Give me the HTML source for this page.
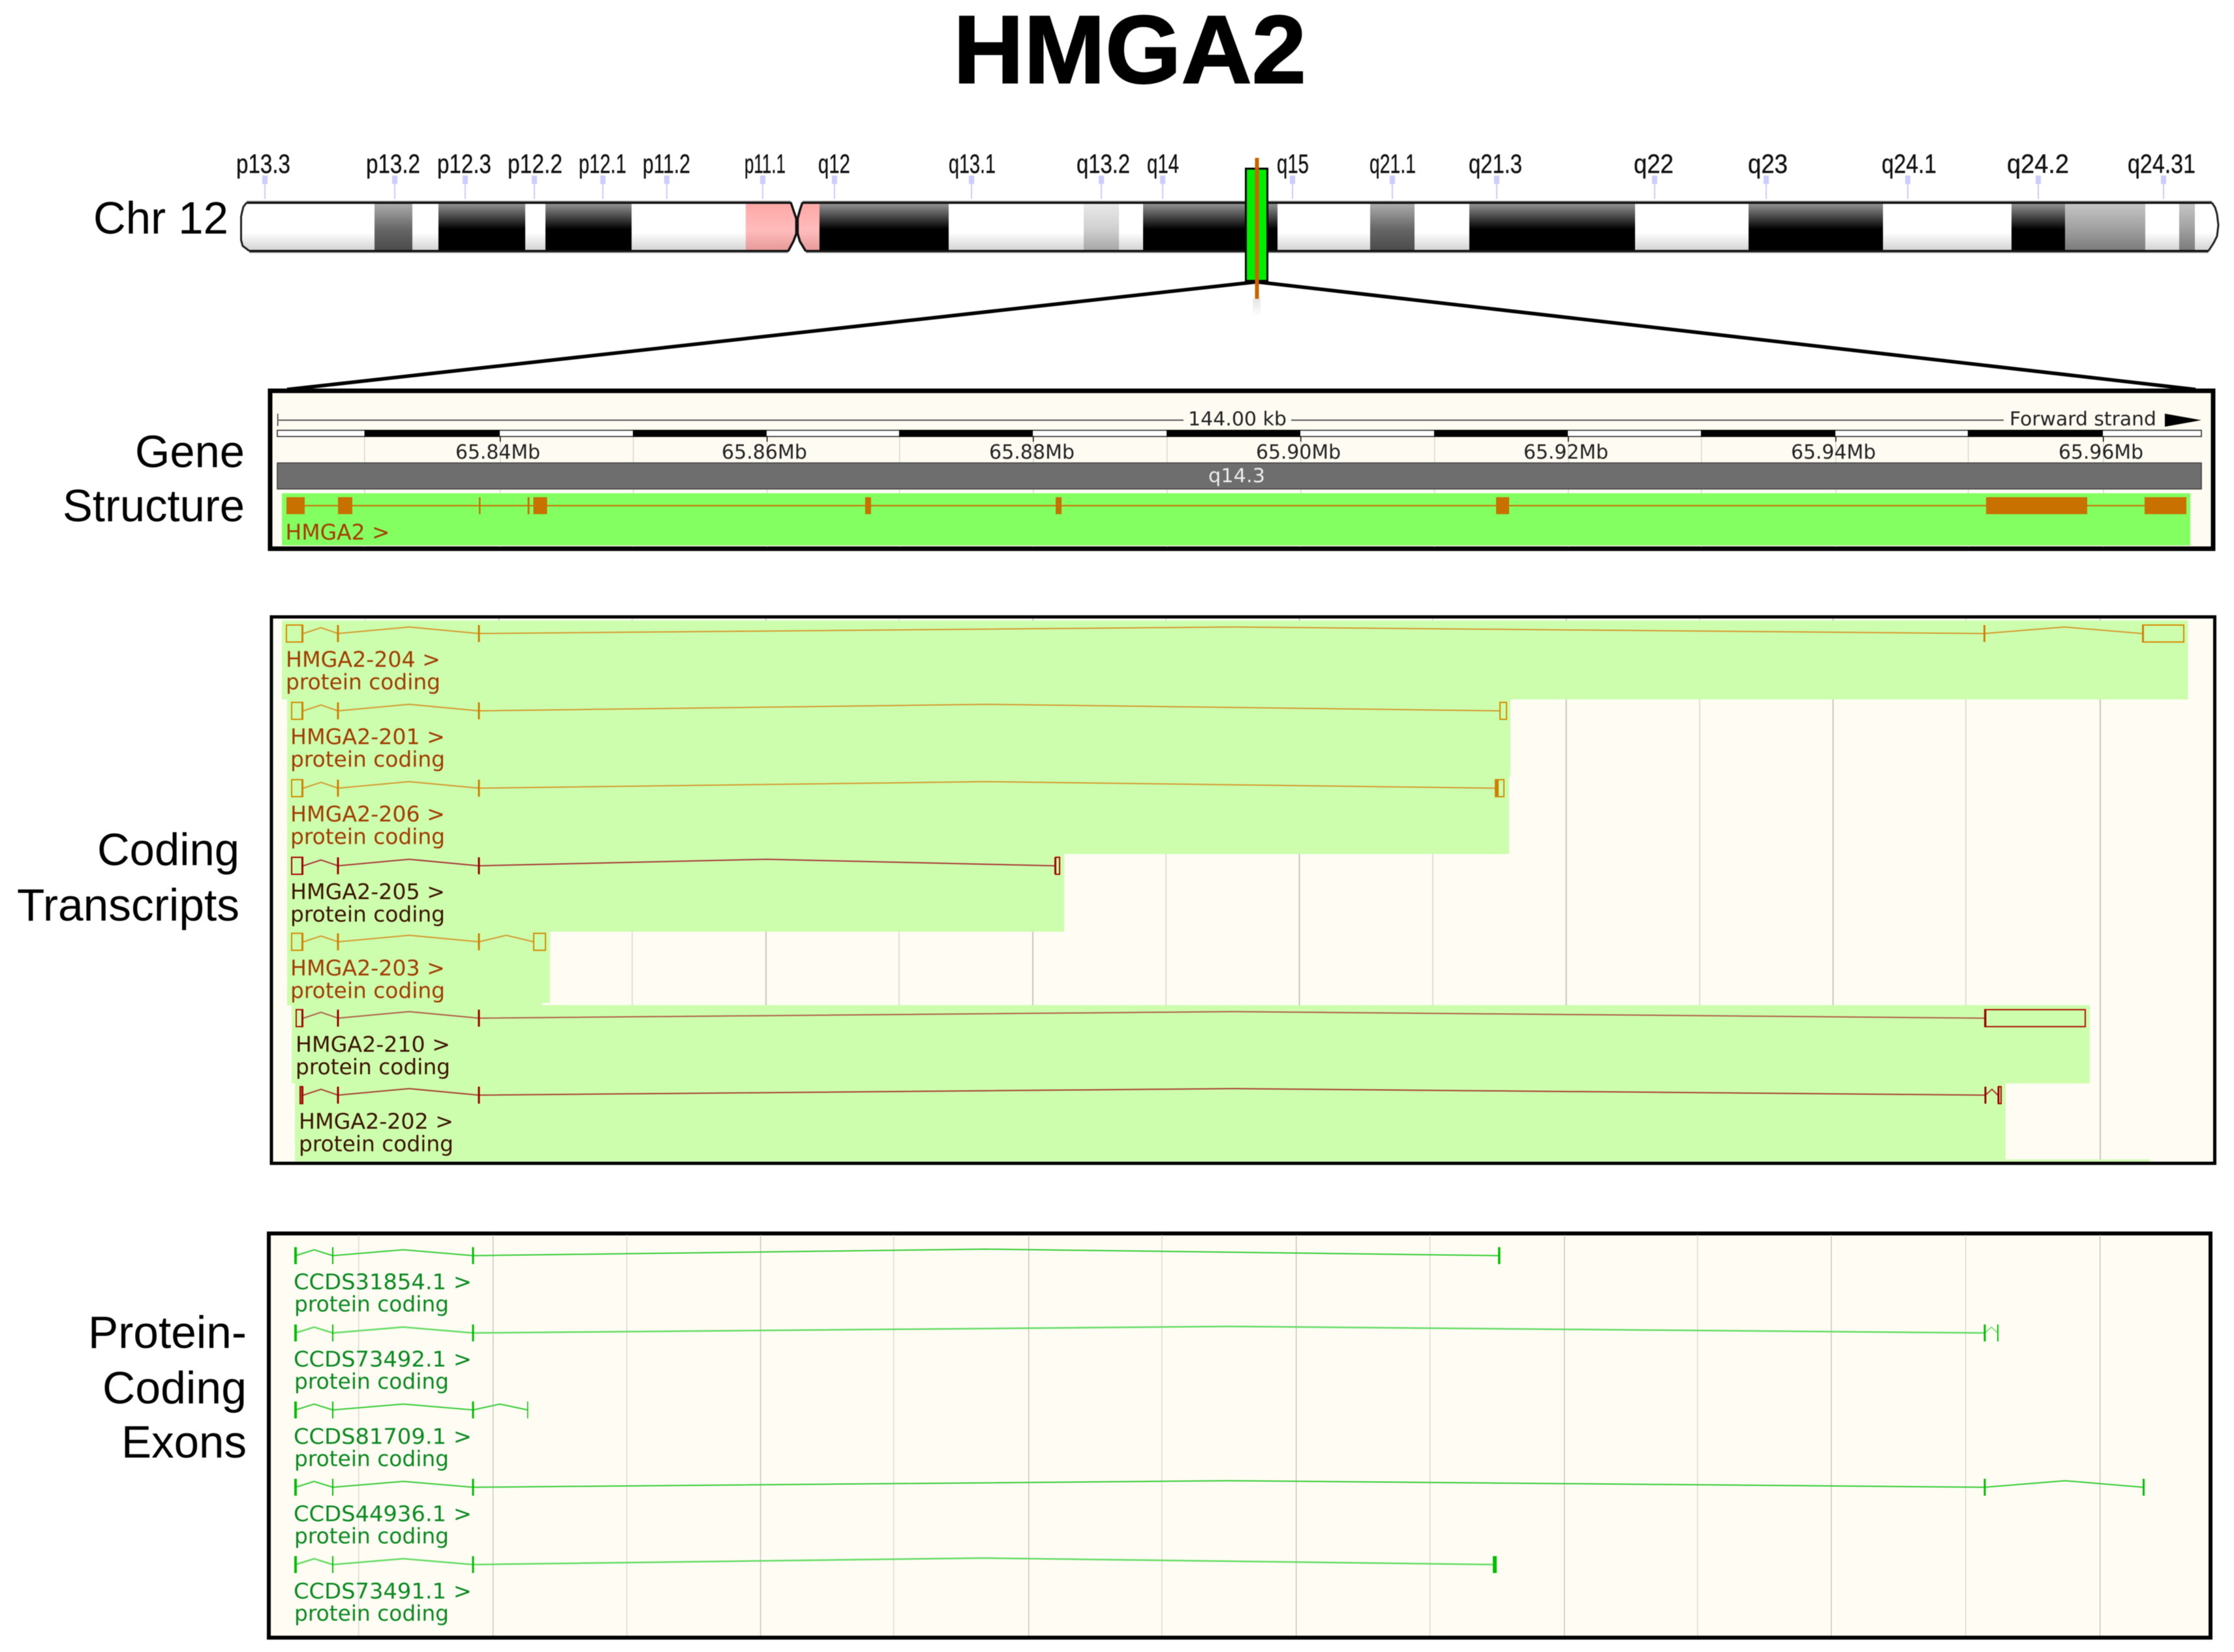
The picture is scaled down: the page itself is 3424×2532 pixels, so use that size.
<!DOCTYPE html>
<html><head><meta charset="utf-8"><title>HMGA2</title>
<style>
html,body{margin:0;padding:0;background:#fff;width:3424px;height:2532px;overflow:hidden}
svg{display:block;filter:blur(.6px)}
.l{font-family:"Liberation Sans",Arial,sans-serif}
.d{font-family:"DejaVu Sans",sans-serif}
</style></head><body>
<svg xmlns="http://www.w3.org/2000/svg" width="3424" height="2532" viewBox="0 0 3424 2532">
<defs>
<linearGradient id="gb" x1="0" y1="313" x2="0" y2="383" gradientUnits="userSpaceOnUse"><stop offset="0" stop-color="#909090"/><stop offset=".55" stop-color="#000"/><stop offset="1" stop-color="#000"/></linearGradient>
<linearGradient id="gw" x1="0" y1="313" x2="0" y2="383" gradientUnits="userSpaceOnUse"><stop offset="0" stop-color="#fff"/><stop offset=".62" stop-color="#fff"/><stop offset="1" stop-color="#d4d4d4"/></linearGradient>
<linearGradient id="gg" x1="0" y1="313" x2="0" y2="383" gradientUnits="userSpaceOnUse"><stop offset="0" stop-color="#aaa"/><stop offset=".55" stop-color="#666"/><stop offset="1" stop-color="#4c4c4c"/></linearGradient>
<linearGradient id="gl" x1="0" y1="313" x2="0" y2="383" gradientUnits="userSpaceOnUse"><stop offset="0" stop-color="#e8e8e8"/><stop offset=".55" stop-color="#d0d0d0"/><stop offset="1" stop-color="#a8a8a8"/></linearGradient>
<linearGradient id="gm" x1="0" y1="313" x2="0" y2="383" gradientUnits="userSpaceOnUse"><stop offset="0" stop-color="#c4c4c4"/><stop offset=".55" stop-color="#a0a0a0"/><stop offset="1" stop-color="#7c7c7c"/></linearGradient>
<linearGradient id="gp" x1="0" y1="313" x2="0" y2="383" gradientUnits="userSpaceOnUse"><stop offset="0" stop-color="#ffa8a8"/><stop offset=".58" stop-color="#ffbcbc"/><stop offset="1" stop-color="#e89a9a"/></linearGradient>
<linearGradient id="gs" x1="0" y1="458" x2="0" y2="485" gradientUnits="userSpaceOnUse"><stop offset="0" stop-color="#ccc"/><stop offset="1" stop-color="#fff"/></linearGradient>
</defs>

<text class="l" x="1461" y="127" font-size="148" font-weight="bold" textLength="541" lengthAdjust="spacingAndGlyphs" stroke="#000" stroke-width="2">HMGA2</text>

<g class="l" font-size="70" fill="#000">
<text x="143" y="358" textLength="207" lengthAdjust="spacingAndGlyphs">Chr 12</text>
<text x="207" y="716" textLength="168" lengthAdjust="spacingAndGlyphs">Gene</text>
<text x="96" y="799" textLength="279" lengthAdjust="spacingAndGlyphs">Structure</text>
<text x="149" y="1326" textLength="218" lengthAdjust="spacingAndGlyphs">Coding</text>
<text x="26" y="1411" textLength="341" lengthAdjust="spacingAndGlyphs">Transcripts</text>
<text x="135" y="2066" textLength="243" lengthAdjust="spacingAndGlyphs">Protein-</text>
<text x="157" y="2151" textLength="221" lengthAdjust="spacingAndGlyphs">Coding</text>
<text x="186" y="2234" textLength="192" lengthAdjust="spacingAndGlyphs">Exons</text>
</g>

<!-- band labels -->
<g class="l" font-size="41" fill="#111" stroke="#111" stroke-width=".4">
<text x="362" y="265" textLength="83" lengthAdjust="spacingAndGlyphs">p13.3</text>
<text x="561" y="265" textLength="83" lengthAdjust="spacingAndGlyphs">p13.2</text>
<text x="670" y="265" textLength="83" lengthAdjust="spacingAndGlyphs">p12.3</text>
<text x="778" y="265" textLength="84" lengthAdjust="spacingAndGlyphs">p12.2</text>
<text x="887" y="265" textLength="73" lengthAdjust="spacingAndGlyphs">p12.1</text>
<text x="985" y="265" textLength="73" lengthAdjust="spacingAndGlyphs">p11.2</text>
<text x="1141" y="265" textLength="63" lengthAdjust="spacingAndGlyphs">p11.1</text>
<text x="1254" y="265" textLength="49" lengthAdjust="spacingAndGlyphs">q12</text>
<text x="1454" y="265" textLength="72" lengthAdjust="spacingAndGlyphs">q13.1</text>
<text x="1650" y="265" textLength="82" lengthAdjust="spacingAndGlyphs">q13.2</text>
<text x="1758" y="265" textLength="49" lengthAdjust="spacingAndGlyphs">q14</text>
<text x="1957" y="265" textLength="49" lengthAdjust="spacingAndGlyphs">q15</text>
<text x="2099" y="265" textLength="71" lengthAdjust="spacingAndGlyphs">q21.1</text>
<text x="2251" y="265" textLength="82" lengthAdjust="spacingAndGlyphs">q21.3</text>
<text x="2504" y="265" textLength="61" lengthAdjust="spacingAndGlyphs">q22</text>
<text x="2679" y="265" textLength="61" lengthAdjust="spacingAndGlyphs">q23</text>
<text x="2884" y="265" textLength="84" lengthAdjust="spacingAndGlyphs">q24.1</text>
<text x="3076" y="265" textLength="95" lengthAdjust="spacingAndGlyphs">q24.2</text>
<text x="3261" y="265" textLength="104" lengthAdjust="spacingAndGlyphs">q24.31</text>
</g>
<!-- ticks -->
<g fill="#ccccff">
<rect x="402" y="269" width="8" height="13"/><rect x="405" y="282" width="2" height="23"/>
<rect x="601" y="269" width="8" height="13"/><rect x="604" y="282" width="2" height="23"/>
<rect x="709" y="269" width="8" height="13"/><rect x="712" y="282" width="2" height="23"/>
<rect x="815" y="269" width="8" height="13"/><rect x="818" y="282" width="2" height="23"/>
<rect x="920" y="269" width="8" height="13"/><rect x="923" y="282" width="2" height="23"/>
<rect x="1018" y="269" width="8" height="13"/><rect x="1021" y="282" width="2" height="23"/>
<rect x="1165" y="269" width="8" height="13"/><rect x="1168" y="282" width="2" height="23"/>
<rect x="1275" y="269" width="8" height="13"/><rect x="1278" y="282" width="2" height="23"/>
<rect x="1485" y="269" width="8" height="13"/><rect x="1488" y="282" width="2" height="23"/>
<rect x="1684" y="269" width="8" height="13"/><rect x="1687" y="282" width="2" height="23"/>
<rect x="1778" y="269" width="8" height="13"/><rect x="1781" y="282" width="2" height="23"/>
<rect x="1977" y="269" width="8" height="13"/><rect x="1980" y="282" width="2" height="23"/>
<rect x="2130" y="269" width="8" height="13"/><rect x="2133" y="282" width="2" height="23"/>
<rect x="2290" y="269" width="8" height="13"/><rect x="2293" y="282" width="2" height="23"/>
<rect x="2532" y="269" width="8" height="13"/><rect x="2535" y="282" width="2" height="23"/>
<rect x="2703" y="269" width="8" height="13"/><rect x="2706" y="282" width="2" height="23"/>
<rect x="2920" y="269" width="8" height="13"/><rect x="2923" y="282" width="2" height="23"/>
<rect x="3120" y="269" width="8" height="13"/><rect x="3123" y="282" width="2" height="23"/>
<rect x="3312" y="269" width="8" height="13"/><rect x="3315" y="282" width="2" height="23"/>
</g>

<!-- chromosome -->
<path d="M378 311 L373 317 L371 325 L369.5 332 V368 L372 377 L382 384.5 H574 V311 Z" fill="url(#gw)"/>
<rect x="574" y="312" width="58" height="71" fill="url(#gg)"/>
<rect x="632" y="312" width="40" height="71" fill="url(#gw)"/>
<rect x="672" y="312" width="133" height="71" fill="url(#gb)"/>
<rect x="805" y="312" width="31" height="71" fill="url(#gw)"/>
<rect x="836" y="312" width="132" height="71" fill="url(#gb)"/>
<rect x="968" y="312" width="175" height="71" fill="url(#gw)"/>
<path d="M1143 311 H1212 L1216 322 L1220.5 335 V358 L1216 370 L1208 384 H1143 Z" fill="url(#gp)"/>
<path d="M1256 311 H1230 L1226 322 L1222.5 335 V358 L1226 370 L1235 384 H1256 Z" fill="url(#gp)"/>
<path d="M1212 310 L1216 322 L1220.5 335 V358 L1216 370 L1208 385" fill="none" stroke="#111" stroke-width="3.5"/>
<path d="M1230 310 L1226 322 L1222.5 335 V358 L1226 370 L1235 385" fill="none" stroke="#111" stroke-width="3.5"/>
<rect x="1256" y="312" width="198" height="71" fill="url(#gb)"/>
<rect x="1454" y="312" width="207" height="71" fill="url(#gw)"/>
<rect x="1661" y="312" width="54" height="71" fill="url(#gl)"/>
<rect x="1715" y="312" width="37" height="71" fill="url(#gw)"/>
<rect x="1752" y="312" width="206" height="71" fill="url(#gb)"/>
<rect x="1958" y="312" width="142" height="71" fill="url(#gw)"/>
<rect x="2100" y="312" width="68" height="71" fill="url(#gg)"/>
<rect x="2168" y="312" width="84" height="71" fill="url(#gw)"/>
<rect x="2252" y="312" width="254" height="71" fill="url(#gb)"/>
<rect x="2506" y="312" width="174" height="71" fill="url(#gw)"/>
<rect x="2680" y="312" width="206" height="71" fill="url(#gb)"/>
<rect x="2886" y="312" width="197" height="71" fill="url(#gw)"/>
<rect x="3083" y="312" width="82" height="71" fill="url(#gb)"/>
<rect x="3165" y="312" width="123" height="71" fill="url(#gm)"/>
<rect x="3288" y="312" width="52" height="71" fill="url(#gw)"/>
<rect x="3340" y="312" width="24" height="71" fill="url(#gm)"/>
<path d="M3364 311 H3390 L3395 318 L3398 328 L3400 345 L3398 362 L3393 372 L3385 384.5 H3364 Z" fill="url(#gw)"/>
<path d="M378 310.5 L373 317 L371 325 L369.5 332 V368 L372 377 L382 384.5" fill="none" stroke="#222" stroke-width="3"/>
<path d="M3390 310.5 L3395 318 L3398 328 L3400 345 L3398 362 L3393 372 L3385 384.5" fill="none" stroke="#222" stroke-width="3"/>
<g fill="#151515">
<rect x="378" y="309" width="834" height="3.5"/><rect x="382" y="383" width="826" height="3.5"/>
<rect x="1230" y="309" width="2160" height="3.5"/><rect x="1235" y="383" width="2150" height="3.5"/>
</g>
<g fill="#aaa">
<rect x="378" y="307.5" width="834" height="1.5"/><rect x="382" y="386.5" width="826" height="1.5"/>
<rect x="1230" y="307.5" width="2160" height="1.5"/><rect x="1235" y="386.5" width="2150" height="1.5"/>
</g>

<!-- marker -->
<rect x="1909.5" y="258.5" width="33" height="172" fill="#00ee00" stroke="#000" stroke-width="3"/>
<rect x="1920" y="458" width="12" height="26" fill="url(#gs)" opacity=".5"/>

<!-- zoom lines -->
<polyline points="440,597 1926,432 3365,597" fill="none" stroke="#000" stroke-width="5.5"/>
<rect x="1923.5" y="242" width="6" height="216" fill="#c86400"/>

<!-- gene structure panel -->
<rect x="414" y="599" width="2978" height="242" fill="#fefbf2" stroke="#000" stroke-width="7"/>
<g fill="#d8d8d0">
<rect x="558" y="669" width="1.5" height="169"/><rect x="766" y="669" width="1.5" height="169"/><rect x="970" y="669" width="1.5" height="169"/><rect x="1175" y="669" width="1.5" height="169"/><rect x="1378" y="669" width="1.5" height="169"/><rect x="1583" y="669" width="1.5" height="169"/><rect x="1788" y="669" width="1.5" height="169"/><rect x="1993" y="669" width="1.5" height="169"/><rect x="2198" y="669" width="1.5" height="169"/><rect x="2403" y="669" width="1.5" height="169"/><rect x="2607" y="669" width="1.5" height="169"/><rect x="2813" y="669" width="1.5" height="169"/><rect x="3016" y="669" width="1.5" height="169"/><rect x="3223" y="669" width="1.5" height="169"/>
</g>
<!-- scale -->
<rect x="425" y="634" width="1.5" height="19" fill="#333"/>
<rect x="425" y="643" width="1389" height="2" fill="#555"/>
<rect x="1979" y="643" width="1092" height="2" fill="#555"/>
<text class="d" x="1821" y="652" font-size="29" textLength="151" lengthAdjust="spacingAndGlyphs" fill="#222">144.00 kb</text>
<text class="d" x="3080" y="652" font-size="29" textLength="225" lengthAdjust="spacingAndGlyphs" fill="#222">Forward strand</text>
<polygon points="3318,634 3374,644 3318,654" fill="#000"/>
<!-- ruler -->
<rect x="425" y="659.5" width="2949" height="9.5" fill="#fff" stroke="#222" stroke-width="1.5"/>
<g fill="#000">
<rect x="558.6" y="659" width="207.4" height="10.5"/><rect x="970" y="659" width="205" height="10.5"/><rect x="1378" y="659" width="205" height="10.5"/><rect x="1788" y="659" width="205" height="10.5"/><rect x="2198" y="659" width="205" height="10.5"/><rect x="2607" y="659" width="206" height="10.5"/><rect x="3016" y="659" width="207" height="10.5"/>
<rect x="766" y="669" width="1.5" height="8"/><rect x="1175" y="669" width="1.5" height="8"/><rect x="1583" y="669" width="1.5" height="8"/><rect x="1993" y="669" width="1.5" height="8"/><rect x="2403" y="669" width="1.5" height="8"/><rect x="2813" y="669" width="1.5" height="8"/><rect x="3223" y="669" width="1.5" height="8"/>
</g>
<g class="d" font-size="30" fill="#222">
<text x="698" y="703" textLength="130" lengthAdjust="spacingAndGlyphs">65.84Mb</text>
<text x="1106" y="703" textLength="131" lengthAdjust="spacingAndGlyphs">65.86Mb</text>
<text x="1516" y="703" textLength="131" lengthAdjust="spacingAndGlyphs">65.88Mb</text>
<text x="1925" y="703" textLength="130" lengthAdjust="spacingAndGlyphs">65.90Mb</text>
<text x="2335" y="703" textLength="130" lengthAdjust="spacingAndGlyphs">65.92Mb</text>
<text x="2745" y="703" textLength="130" lengthAdjust="spacingAndGlyphs">65.94Mb</text>
<text x="3155" y="703" textLength="130" lengthAdjust="spacingAndGlyphs">65.96Mb</text>
</g>
<rect x="425" y="709.5" width="2949" height="40" fill="#6e6e6e" stroke="#3c3c3c" stroke-width="1.5"/>
<text class="d" x="1852" y="739" font-size="29" textLength="87" lengthAdjust="spacingAndGlyphs" fill="#eee">q14.3</text>
<!-- gene -->
<rect x="432" y="756" width="2925" height="80" fill="#84ff62"/>
<rect x="439" y="774" width="2912" height="2" fill="#cc7000"/>
<g fill="#c87000">
<rect x="439" y="762" width="28" height="26"/><rect x="518" y="762" width="22" height="26"/><rect x="734" y="762" width="2.5" height="26"/><rect x="808.6" y="762" width="3" height="26"/><rect x="817.5" y="762" width="21" height="26"/><rect x="1326" y="762" width="9" height="26"/><rect x="1618" y="762" width="9" height="26"/><rect x="2293" y="762" width="20" height="26"/><rect x="3044" y="762" width="155" height="26"/><rect x="3287" y="762" width="64" height="26"/>
</g>
<text class="d" x="437.5" y="827" font-size="33" textLength="160" lengthAdjust="spacingAndGlyphs" fill="#a83c00">HMGA2 &gt;</text>

<!-- transcripts panel -->
<rect x="416" y="945.5" width="2978.5" height="837.5" fill="#fefcf3" stroke="#000" stroke-width="5"/>
<g fill="#e0ded6">
<rect x="559" y="948" width="2" height="832"/><rect x="968" y="948" width="2" height="832"/><rect x="1377" y="948" width="2" height="832"/><rect x="1786" y="948" width="2" height="832"/><rect x="2195" y="948" width="2" height="832"/><rect x="2604" y="948" width="2" height="832"/><rect x="3012" y="948" width="2" height="832"/>
</g>
<g fill="#c8c6c0">
<rect x="764" y="948" width="2" height="832"/><rect x="1173" y="948" width="2" height="832"/><rect x="1582" y="948" width="2" height="832"/><rect x="1990.5" y="948" width="2" height="832"/><rect x="2399.5" y="948" width="2" height="832"/><rect x="2808.5" y="948" width="2" height="832"/><rect x="3218" y="948" width="2" height="832"/>
</g>
<g fill="#cdfead">
<rect x="432" y="951" width="2921.5" height="121"/>
<rect x="440" y="1071" width="1875" height="119"/>
<rect x="440" y="1189" width="1873" height="120"/>
<rect x="440" y="1308" width="1191" height="120"/>
<rect x="440" y="1427" width="403" height="110"/>
<rect x="440" y="1537" width="391" height="4"/>
<rect x="447" y="1540.5" width="2756" height="120"/>
<rect x="452" y="1660" width="2622" height="117"/>
<rect x="452" y="1777" width="2843" height="3"/>
</g>

<!-- row 204 -->
<g transform="translate(0,971)" fill="none" stroke="#d69a30" stroke-width="2">
<polyline points="465,0 492,-9 518,0"/><polyline points="518,0 627,-10 734,0"/><polyline points="734,0 1888,-10 3041,0"/><polyline points="3041,0 3164,-10 3283,0"/>
<g stroke="#d58a00"><rect x="439" y="-13" width="25" height="26"/><rect x="3284" y="-13" width="63" height="26"/></g>
<g stroke="none" fill="#d08000"><rect x="462" y="-13" width="3" height="26"/><rect x="516.5" y="-13" width="3" height="26"/><rect x="732.5" y="-13" width="3" height="26"/><rect x="3040" y="-13" width="3" height="26"/><rect x="3283" y="-13" width="3" height="26"/></g>
</g>
<!-- row 201 -->
<g transform="translate(0,1089.5)" fill="none" stroke="#d69a30" stroke-width="2">
<polyline points="465,0 492,-9 518,0"/><polyline points="518,0 627,-10 734,0"/><polyline points="734,0 1516,-10 2298,0"/>
<g stroke="#d58a00"><rect x="447" y="-13" width="17" height="26"/><rect x="2299" y="-13" width="10" height="26"/></g>
<g stroke="none" fill="#d08000"><rect x="462" y="-13" width="3" height="26"/><rect x="516.5" y="-13" width="3" height="26"/><rect x="732.5" y="-13" width="3" height="26"/></g>
</g>
<!-- row 206 -->
<g transform="translate(0,1208)" fill="none" stroke="#d69a30" stroke-width="2">
<polyline points="465,0 492,-9 518,0"/><polyline points="518,0 627,-10 734,0"/><polyline points="734,0 1512,-10 2291,0"/>
<g stroke="#d58a00"><rect x="447" y="-13" width="17" height="26"/><rect x="2292" y="-13" width="13" height="26"/></g>
<g stroke="none" fill="#d08000"><rect x="462" y="-13" width="3" height="26"/><rect x="516.5" y="-13" width="3" height="26"/><rect x="732.5" y="-13" width="3" height="26"/><rect x="2291" y="-13" width="6" height="26"/></g>
</g>
<!-- row 205 -->
<g transform="translate(0,1327)" fill="none" stroke="#a83838" stroke-width="2">
<polyline points="465,0 492,-9 518,0"/><polyline points="518,0 627,-10 734,0"/><polyline points="734,0 1175,-10 1616,0"/>
<g stroke="#a80000"><rect x="447" y="-13" width="17" height="26"/><rect x="1618" y="-13" width="6" height="26"/></g>
<g stroke="none" fill="#a00000"><rect x="462" y="-13" width="3" height="26"/><rect x="516.5" y="-13" width="3" height="26"/><rect x="732.5" y="-13" width="3" height="26"/><rect x="1616" y="-13" width="3" height="26"/></g>
</g>
<!-- row 203 -->
<g transform="translate(0,1443.5)" fill="none" stroke="#d69a30" stroke-width="2">
<polyline points="465,0 492,-9 518,0"/><polyline points="518,0 627,-10 734,0"/><polyline points="734,0 776,-10 818,0"/>
<g stroke="#d58a00"><rect x="447" y="-13" width="17" height="26"/><rect x="818" y="-13" width="18" height="26"/></g>
<g stroke="none" fill="#d08000"><rect x="462" y="-13" width="3" height="26"/><rect x="516.5" y="-13" width="3" height="26"/><rect x="732.5" y="-13" width="3" height="26"/></g>
</g>
<!-- row 210 -->
<g transform="translate(0,1560.5)" fill="none" stroke="#b06048" stroke-width="2">
<polyline points="465,0 492,-9 518,0"/><polyline points="518,0 627,-10 734,0"/><polyline points="734,0 1888,-10 3041,0"/>
<g stroke="#b01000"><rect x="454" y="-13" width="10" height="26"/><rect x="3042" y="-13" width="154" height="26"/></g>
<g stroke="none" fill="#a00000"><rect x="462" y="-13" width="3" height="26"/><rect x="516.5" y="-13" width="3" height="26"/><rect x="732.5" y="-13" width="3" height="26"/><rect x="3041.5" y="-13" width="3" height="26"/></g>
</g>
<!-- row 202 -->
<g transform="translate(0,1678.5)" fill="none" stroke="#a84030" stroke-width="2">
<polyline points="465,0 492,-9 518,0"/><polyline points="518,0 627,-10 734,0"/><polyline points="734,0 1888,-10 3042,0"/><polyline points="3043,0 3053,-9 3062,0"/>
<g stroke="#a80000"><rect x="460" y="-13" width="4" height="26"/><rect x="3063" y="-13" width="4" height="26"/></g>
<g stroke="none" fill="#a00000"><rect x="459" y="-13" width="2.5" height="26"/><rect x="462" y="-13" width="3" height="26"/><rect x="516.5" y="-13" width="3" height="26"/><rect x="732.5" y="-13" width="3" height="26"/><rect x="3041.5" y="-13" width="3" height="26"/><rect x="3061.5" y="-13" width="3" height="26"/></g>
</g>
<!-- transcript labels -->
<g class="d" font-size="33">
<g fill="#a33c00">
<text x="438" y="1022" textLength="237" lengthAdjust="spacingAndGlyphs">HMGA2-204 &gt;</text><text x="438" y="1056.5" textLength="237" lengthAdjust="spacingAndGlyphs">protein coding</text>
<text x="445" y="1140.5" textLength="237" lengthAdjust="spacingAndGlyphs">HMGA2-201 &gt;</text><text x="445" y="1175" textLength="237" lengthAdjust="spacingAndGlyphs">protein coding</text>
<text x="445" y="1259" textLength="237" lengthAdjust="spacingAndGlyphs">HMGA2-206 &gt;</text><text x="445" y="1293.5" textLength="237" lengthAdjust="spacingAndGlyphs">protein coding</text>
<text x="445" y="1495" textLength="237" lengthAdjust="spacingAndGlyphs">HMGA2-203 &gt;</text><text x="445" y="1529.5" textLength="237" lengthAdjust="spacingAndGlyphs">protein coding</text>
</g>
<g fill="#3c1400">
<text x="445" y="1378" textLength="237" lengthAdjust="spacingAndGlyphs">HMGA2-205 &gt;</text><text x="445" y="1412.5" textLength="237" lengthAdjust="spacingAndGlyphs">protein coding</text>
<text x="453" y="1612" textLength="237" lengthAdjust="spacingAndGlyphs">HMGA2-210 &gt;</text><text x="453" y="1646.5" textLength="237" lengthAdjust="spacingAndGlyphs">protein coding</text>
<text x="458" y="1730" textLength="237" lengthAdjust="spacingAndGlyphs">HMGA2-202 &gt;</text><text x="458" y="1764.5" textLength="237" lengthAdjust="spacingAndGlyphs">protein coding</text>
</g>
</g>

<!-- CCDS panel -->
<rect x="412" y="1890.5" width="2976" height="619.5" fill="#fefcf3" stroke="#000" stroke-width="6"/>
<g fill="#dcdad2">
<rect x="549" y="1893" width="1.5" height="614"/><rect x="960" y="1893" width="1.5" height="614"/><rect x="1369" y="1893" width="1.5" height="614"/><rect x="1780" y="1893" width="1.5" height="614"/><rect x="2191" y="1893" width="1.5" height="614"/><rect x="2601" y="1893" width="1.5" height="614"/><rect x="3012" y="1893" width="1.5" height="614"/>
</g>
<g fill="#c8c6be">
<rect x="755" y="1893" width="1.5" height="614"/><rect x="1165" y="1893" width="1.5" height="614"/><rect x="1576" y="1893" width="1.5" height="614"/><rect x="1986" y="1893" width="1.5" height="614"/><rect x="2397" y="1893" width="1.5" height="614"/><rect x="2806" y="1893" width="1.5" height="614"/><rect x="3218" y="1893" width="1.5" height="614"/>
</g>
<g transform="translate(0,1924.5)" fill="none" stroke="#33cc33" stroke-width="2">
<polyline points="453,0 481.5,-9 510,0"/><polyline points="510,0 618,-9 725,0"/><polyline points="725,0 1511,-10 2297,0"/>
<g stroke="none" fill="#00c000"><rect x="451" y="-13" width="4" height="26"/><rect x="509" y="-13" width="2" height="26"/><rect x="723.5" y="-13" width="3" height="26"/><rect x="2296" y="-13" width="3.5" height="26"/></g>
</g>
<g transform="translate(0,2043)" fill="none" stroke="#66dd66" stroke-width="2.5">
<polyline points="453,0 481.5,-9 510,0"/><polyline points="510,0 618,-9 725,0"/><polyline points="725,0 1883,-10 3042,0"/><polyline points="3042,0 3052,-9 3062,0" stroke-width="1.5"/>
<g stroke="none" fill="#00c000"><rect x="451" y="-13" width="4" height="26"/><rect x="509" y="-13" width="2" height="26"/><rect x="723.5" y="-13" width="3" height="26"/><rect x="3040.5" y="-13" width="3" height="26"/><rect x="3061" y="-13" width="2" height="26"/></g>
</g>
<g transform="translate(0,2161)" fill="none" stroke="#33cc33" stroke-width="2">
<polyline points="453,0 481.5,-9 510,0"/><polyline points="510,0 618,-9 725,0"/><polyline points="725,0 766,-9 809,0"/>
<g stroke="none" fill="#00c000"><rect x="451" y="-13" width="4" height="26"/><rect x="509" y="-13" width="2" height="26"/><rect x="723.5" y="-13" width="3" height="26"/><rect x="808" y="-13" width="1.5" height="26"/></g>
</g>
<g transform="translate(0,2279.5)" fill="none" stroke="#33cc33" stroke-width="2">
<polyline points="453,0 481.5,-9 510,0"/><polyline points="510,0 618,-9 725,0"/><polyline points="725,0 1883,-10 3042,0"/><polyline points="3042,0 3165,-10 3285,0"/>
<g stroke="none" fill="#00c000"><rect x="451" y="-13" width="4" height="26"/><rect x="509" y="-13" width="2" height="26"/><rect x="723.5" y="-13" width="3" height="26"/><rect x="3040.5" y="-13" width="3" height="26"/><rect x="3284" y="-13" width="3" height="26"/></g>
</g>
<g transform="translate(0,2398)" fill="none" stroke="#66dd66" stroke-width="2.5">
<polyline points="453,0 481.5,-9 510,0"/><polyline points="510,0 618,-9 725,0"/><polyline points="725,0 1507,-10 2288,0"/>
<g stroke="none" fill="#00c000"><rect x="451" y="-13" width="4" height="26"/><rect x="509" y="-13" width="2" height="26"/><rect x="723.5" y="-13" width="3" height="26"/><rect x="2288" y="-13" width="6" height="26"/></g>
</g>
<g class="d" font-size="33" fill="#0a8a20">
<text x="450" y="1976" textLength="273" lengthAdjust="spacingAndGlyphs">CCDS31854.1 &gt;</text><text x="451" y="2010" textLength="237" lengthAdjust="spacingAndGlyphs">protein coding</text>
<text x="450" y="2094.5" textLength="273" lengthAdjust="spacingAndGlyphs">CCDS73492.1 &gt;</text><text x="451" y="2128.5" textLength="237" lengthAdjust="spacingAndGlyphs">protein coding</text>
<text x="450" y="2213" textLength="273" lengthAdjust="spacingAndGlyphs">CCDS81709.1 &gt;</text><text x="451" y="2247" textLength="237" lengthAdjust="spacingAndGlyphs">protein coding</text>
<text x="450" y="2331.5" textLength="273" lengthAdjust="spacingAndGlyphs">CCDS44936.1 &gt;</text><text x="451" y="2365.5" textLength="237" lengthAdjust="spacingAndGlyphs">protein coding</text>
<text x="450" y="2450" textLength="273" lengthAdjust="spacingAndGlyphs">CCDS73491.1 &gt;</text><text x="451" y="2484" textLength="237" lengthAdjust="spacingAndGlyphs">protein coding</text>
</g>
</svg>
</body></html>
